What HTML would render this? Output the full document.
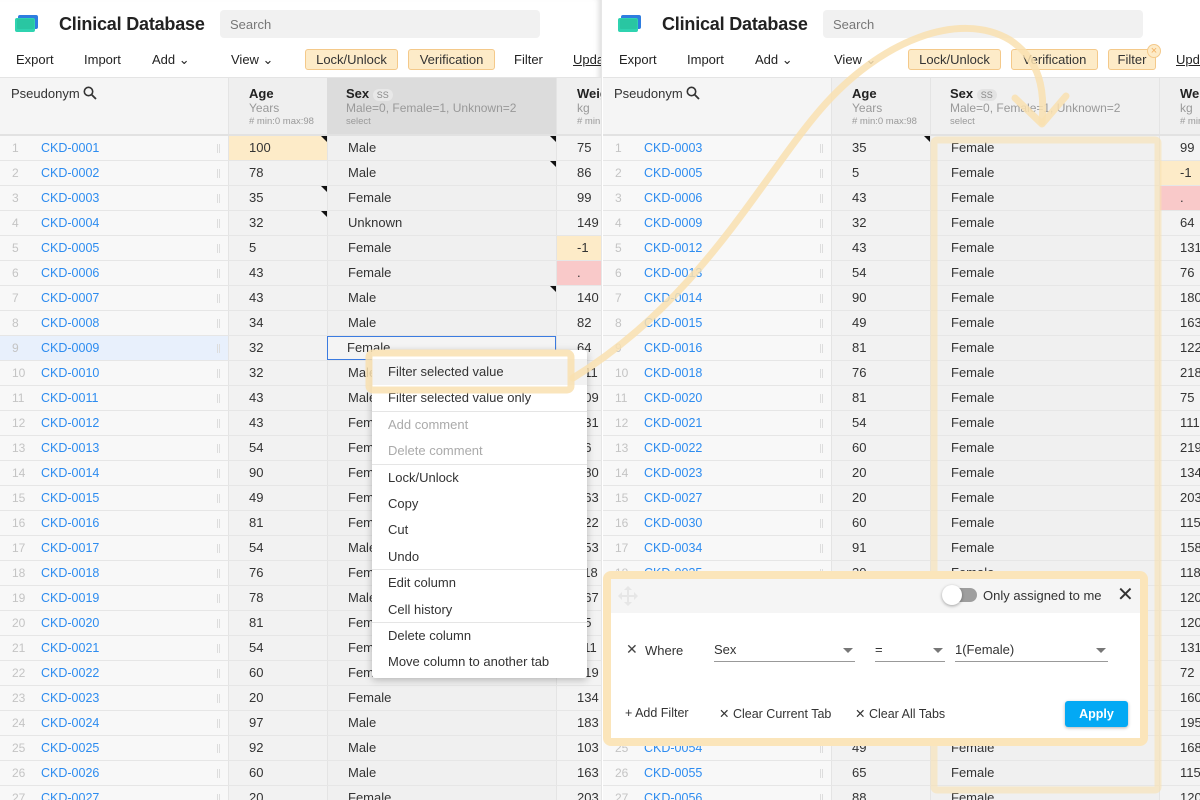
<!DOCTYPE html>
<html><head><meta charset="utf-8">
<style>
*{box-sizing:border-box;margin:0;padding:0}
body{width:1200px;height:800px;overflow:hidden;background:#fff;font-family:"Liberation Sans",Arial,sans-serif;font-size:13px;color:#333;position:relative}
.panel{position:absolute;top:0;height:800px;overflow:hidden;background:#fff}
.p1{left:0;width:601px;box-shadow:inset -6px 0 6px -4px rgba(0,0,0,.15)}
.p2{left:601px;width:599px;border-left:1px solid #e6e6e6}
.in{position:absolute;top:0;left:0;width:700px;height:800px}
.p2 .in{left:1px}
.logo{position:absolute;left:14px;top:14px;width:26px;height:20px}
.title{position:absolute;left:59px;top:14px;font-size:18px;font-weight:bold;color:#222;letter-spacing:-.2px}
.search{position:absolute;left:220px;top:10px;width:320px;height:28px;background:#f1f1f1;border-radius:4px;color:#777;font-size:13px;padding:7px 10px}
.tb{position:absolute;top:52px;font-size:13px;color:#222}
.btn{position:absolute;top:49px;height:21px;background:#fdebc8;border:1px solid #f4c98a;border-radius:3px;font-size:13px;color:#333;text-align:center;line-height:19px}
.hdr{position:absolute;top:77px;left:0;width:700px;height:59px;border-top:1px solid #e4e4e4;border-bottom:3px solid #e2e2e2}
.hc{position:absolute;top:0;height:56px;white-space:nowrap;overflow:hidden}
.hn{font-weight:bold;font-size:13px;color:#222}
.hs{font-size:12px;color:#999}
.hm{font-size:9.5px;color:#999;margin-top:1px}
.row{position:absolute;left:0;width:700px;height:25px;border-bottom:1px solid #e6e6e6}
.c{position:absolute;top:0;height:24px;line-height:24px}
.n{left:0;width:228px;background:#f8f8f8;color:#c4c4c4;padding-left:12px;font-size:12px}
.id{position:absolute;left:41px;color:#2d8cf0;font-size:12.5px}
.g{position:absolute;left:217px;top:8px;width:3px;height:9px;border-left:1px solid #ddd;border-right:1px solid #ddd}
.a{left:228px;width:99px;background:#f2f2f2;padding-left:20px;border-left:1px solid #e4e4e4}
.s{left:327px;width:229px;background:#f0f0f0;padding-left:20px;border-left:1px solid #e4e4e4}
.w{left:556px;width:100px;background:#f3f3f3;padding-left:20px;border-left:1px solid #e4e4e4}
.tri:after{content:"";position:absolute;right:0;top:0;border-top:6px solid #111;border-left:6px solid transparent}
.or{background:#fdebc8}
.rd{background:#f9c9c9}
.menu{position:absolute;left:372px;top:350px;width:215px;height:328px;background:#fff;box-shadow:0 2px 8px rgba(0,0,0,.25);border-radius:3px;z-index:5}
.mi{height:26.4px;line-height:26px;padding-left:16px;font-size:13px;color:#333}
.mi.d{color:#aaa}
.sep{border-bottom:1px solid #e5e5e5}
.fp{position:absolute;left:603px;top:571px;width:545px;height:175px;border:8px solid #fbe5ba;border-radius:8px;background:#fff;z-index:8}
.fh{height:34px;background:#f5f5f5;position:relative}
.sel{position:absolute;top:63px;border-bottom:1px solid #999;height:20px;font-size:13px;color:#333}
.sel:after{content:"";position:absolute;right:2px;top:6px;border-top:5px solid #777;border-left:5px solid transparent;border-right:5px solid transparent}
</style></head><body>

<!-- LEFT PANEL -->
<div class="panel p1"><div class="in">
<svg class="logo" viewBox="0 0 26 20"><rect x="4" y="1" width="20" height="14" rx="2" fill="#2e7de0"/><rect x="1" y="4" width="20" height="14" rx="2" fill="#2fd3b0"/><rect x="3" y="5" width="17" height="10" rx="1" fill="#29c6a2"/></svg>
<div class="title">Clinical Database</div>
<div class="search">Search</div>
<div class="tb" style="left:16px">Export</div>
<div class="tb" style="left:84px">Import</div>
<div class="tb" style="left:152px">Add ⌄</div>
<div class="tb" style="left:231px">View ⌄</div>
<div class="btn" style="left:305px;width:93px">Lock/Unlock</div>
<div class="btn" style="left:408px;width:87px">Verification</div>
<div class="tb" style="left:514px">Filter</div>
<div class="tb" style="left:573px;text-decoration:underline">Update</div>
<div class="hdr">
 <div class="hc" style="left:0;width:228px;background:#f5f5f5;padding:8px 11px">Pseudonym <svg width="14" height="14" viewBox="0 0 14 14" style="vertical-align:-2px"><circle cx="5.5" cy="5.5" r="4.2" fill="none" stroke="#333" stroke-width="1.6"/><path d="M8.6 8.6L13 13" stroke="#333" stroke-width="1.8"/></svg></div>
 <div class="hc" style="left:228px;width:99px;background:#efefef;padding:8px 0 0 20px;border-left:1px solid #e4e4e4"><div class="hn">Age</div><div class="hs">Years</div><div class="hm"># min:0 max:98</div></div>
 <div class="hc" style="left:327px;width:229px;background:#dcdcdc;padding:8px 0 0 19px"><div class="hn">Sex <span style="font-weight:normal;font-size:9px;color:#888;background:#e8e8e8;border-radius:8px;padding:1px 4px">SS</span></div><div class="hs">Male=0, Female=1, Unknown=2</div><div class="hm">select</div></div>
 <div class="hc" style="left:556px;width:100px;background:#efefef;padding:8px 0 0 20px;border-left:1px solid #e4e4e4"><div class="hn">Weight</div><div class="hs">kg</div><div class="hm"># min:0</div></div>
</div>
<div class="row" style="top:136px"><div class="c n">1<span class="id">CKD-0001</span><span class="g"></span></div><div class="c a or tri">100</div><div class="c s tri">Male</div><div class="c w">75</div></div>
<div class="row" style="top:161px"><div class="c n">2<span class="id">CKD-0002</span><span class="g"></span></div><div class="c a">78</div><div class="c s tri">Male</div><div class="c w">86</div></div>
<div class="row" style="top:186px"><div class="c n">3<span class="id">CKD-0003</span><span class="g"></span></div><div class="c a tri">35</div><div class="c s">Female</div><div class="c w">99</div></div>
<div class="row" style="top:211px"><div class="c n">4<span class="id">CKD-0004</span><span class="g"></span></div><div class="c a tri">32</div><div class="c s">Unknown</div><div class="c w">149</div></div>
<div class="row" style="top:236px"><div class="c n">5<span class="id">CKD-0005</span><span class="g"></span></div><div class="c a">5</div><div class="c s">Female</div><div class="c w or">-1</div></div>
<div class="row" style="top:261px"><div class="c n">6<span class="id">CKD-0006</span><span class="g"></span></div><div class="c a">43</div><div class="c s">Female</div><div class="c w rd">.</div></div>
<div class="row" style="top:286px"><div class="c n">7<span class="id">CKD-0007</span><span class="g"></span></div><div class="c a">43</div><div class="c s tri">Male</div><div class="c w">140</div></div>
<div class="row" style="top:311px"><div class="c n">8<span class="id">CKD-0008</span><span class="g"></span></div><div class="c a">34</div><div class="c s">Male</div><div class="c w">82</div></div>
<div class="row" style="top:336px"><div class="c n" style="background:#e8f0fc">9<span class="id">CKD-0009</span><span class="g"></span></div><div class="c a">32</div><div class="c s" style="border:1.5px solid #3b7be0;background:#f4f4f4;line-height:22px;padding-left:19px">Female</div><div class="c w">64</div></div>
<div class="row" style="top:361px"><div class="c n">10<span class="id">CKD-0010</span><span class="g"></span></div><div class="c a">32</div><div class="c s">Male</div><div class="c w">211</div></div>
<div class="row" style="top:386px"><div class="c n">11<span class="id">CKD-0011</span><span class="g"></span></div><div class="c a">43</div><div class="c s">Male</div><div class="c w">109</div></div>
<div class="row" style="top:411px"><div class="c n">12<span class="id">CKD-0012</span><span class="g"></span></div><div class="c a">43</div><div class="c s">Female</div><div class="c w">131</div></div>
<div class="row" style="top:436px"><div class="c n">13<span class="id">CKD-0013</span><span class="g"></span></div><div class="c a">54</div><div class="c s">Female</div><div class="c w">76</div></div>
<div class="row" style="top:461px"><div class="c n">14<span class="id">CKD-0014</span><span class="g"></span></div><div class="c a">90</div><div class="c s">Female</div><div class="c w">180</div></div>
<div class="row" style="top:486px"><div class="c n">15<span class="id">CKD-0015</span><span class="g"></span></div><div class="c a">49</div><div class="c s">Female</div><div class="c w">163</div></div>
<div class="row" style="top:511px"><div class="c n">16<span class="id">CKD-0016</span><span class="g"></span></div><div class="c a">81</div><div class="c s">Female</div><div class="c w">122</div></div>
<div class="row" style="top:536px"><div class="c n">17<span class="id">CKD-0017</span><span class="g"></span></div><div class="c a">54</div><div class="c s">Male</div><div class="c w">153</div></div>
<div class="row" style="top:561px"><div class="c n">18<span class="id">CKD-0018</span><span class="g"></span></div><div class="c a">76</div><div class="c s">Female</div><div class="c w">118</div></div>
<div class="row" style="top:586px"><div class="c n">19<span class="id">CKD-0019</span><span class="g"></span></div><div class="c a">78</div><div class="c s">Male</div><div class="c w">167</div></div>
<div class="row" style="top:611px"><div class="c n">20<span class="id">CKD-0020</span><span class="g"></span></div><div class="c a">81</div><div class="c s">Female</div><div class="c w">75</div></div>
<div class="row" style="top:636px"><div class="c n">21<span class="id">CKD-0021</span><span class="g"></span></div><div class="c a">54</div><div class="c s">Female</div><div class="c w">111</div></div>
<div class="row" style="top:661px"><div class="c n">22<span class="id">CKD-0022</span><span class="g"></span></div><div class="c a">60</div><div class="c s">Female</div><div class="c w">219</div></div>
<div class="row" style="top:686px"><div class="c n">23<span class="id">CKD-0023</span><span class="g"></span></div><div class="c a">20</div><div class="c s">Female</div><div class="c w">134</div></div>
<div class="row" style="top:711px"><div class="c n">24<span class="id">CKD-0024</span><span class="g"></span></div><div class="c a">97</div><div class="c s">Male</div><div class="c w">183</div></div>
<div class="row" style="top:736px"><div class="c n">25<span class="id">CKD-0025</span><span class="g"></span></div><div class="c a">92</div><div class="c s">Male</div><div class="c w">103</div></div>
<div class="row" style="top:761px"><div class="c n">26<span class="id">CKD-0026</span><span class="g"></span></div><div class="c a">60</div><div class="c s">Male</div><div class="c w">163</div></div>
<div class="row" style="top:786px"><div class="c n">27<span class="id">CKD-0027</span><span class="g"></span></div><div class="c a">20</div><div class="c s">Female</div><div class="c w">203</div></div>
</div></div>

<div class="menu">
 <div class="mi" style="background:#f2f2f2;margin-top:9px">Filter selected value</div>
 <div class="mi sep">Filter selected value only</div>
 <div class="mi d">Add comment</div>
 <div class="mi d sep">Delete comment</div>
 <div class="mi">Lock/Unlock</div>
 <div class="mi">Copy</div>
 <div class="mi">Cut</div>
 <div class="mi sep">Undo</div>
 <div class="mi">Edit column</div>
 <div class="mi sep">Cell history</div>
 <div class="mi">Delete column</div>
 <div class="mi">Move column to another tab</div>
</div>

<!-- RIGHT PANEL -->
<div class="panel p2"><div class="in">
<svg class="logo" viewBox="0 0 26 20"><rect x="4" y="1" width="20" height="14" rx="2" fill="#2e7de0"/><rect x="1" y="4" width="20" height="14" rx="2" fill="#2fd3b0"/><rect x="3" y="5" width="17" height="10" rx="1" fill="#29c6a2"/></svg>
<div class="title">Clinical Database</div>
<div class="search">Search</div>
<div class="tb" style="left:16px">Export</div>
<div class="tb" style="left:84px">Import</div>
<div class="tb" style="left:152px">Add ⌄</div>
<div class="tb" style="left:231px">View ⌄</div>
<div class="btn" style="left:305px;width:93px">Lock/Unlock</div>
<div class="btn" style="left:408px;width:87px">Verification</div>
<div class="btn" style="left:505px;width:48px">Filter</div>
<div style="position:absolute;left:544px;top:44px;width:14px;height:14px;border-radius:50%;background:#fdebc8;border:1px solid #f4c98a;color:#f4b060;font-size:11px;line-height:12px;text-align:center">×</div>
<div class="tb" style="left:573px;text-decoration:underline">Update</div>
<div class="hdr">
 <div class="hc" style="left:0;width:228px;background:#f5f5f5;padding:8px 11px">Pseudonym <svg width="14" height="14" viewBox="0 0 14 14" style="vertical-align:-2px"><circle cx="5.5" cy="5.5" r="4.2" fill="none" stroke="#333" stroke-width="1.6"/><path d="M8.6 8.6L13 13" stroke="#333" stroke-width="1.8"/></svg></div>
 <div class="hc" style="left:228px;width:99px;background:#efefef;padding:8px 0 0 20px;border-left:1px solid #e4e4e4"><div class="hn">Age</div><div class="hs">Years</div><div class="hm"># min:0 max:98</div></div>
 <div class="hc" style="left:327px;width:229px;background:#f0f0f0;padding:8px 0 0 19px;border-left:1px solid #e4e4e4"><div class="hn">Sex <span style="font-weight:normal;font-size:9px;color:#888;background:#e3e3e3;border-radius:8px;padding:1px 4px">SS</span></div><div class="hs">Male=0, Female=1, Unknown=2</div><div class="hm">select</div></div>
 <div class="hc" style="left:556px;width:100px;background:#efefef;padding:8px 0 0 20px;border-left:1px solid #e4e4e4"><div class="hn">Weight</div><div class="hs">kg</div><div class="hm"># min:0</div></div>
</div>
<div class="row" style="top:136px"><div class="c n">1<span class="id">CKD-0003</span><span class="g"></span></div><div class="c a tri">35</div><div class="c s">Female</div><div class="c w">99</div></div>
<div class="row" style="top:161px"><div class="c n">2<span class="id">CKD-0005</span><span class="g"></span></div><div class="c a">5</div><div class="c s">Female</div><div class="c w or">-1</div></div>
<div class="row" style="top:186px"><div class="c n">3<span class="id">CKD-0006</span><span class="g"></span></div><div class="c a">43</div><div class="c s">Female</div><div class="c w rd">.</div></div>
<div class="row" style="top:211px"><div class="c n">4<span class="id">CKD-0009</span><span class="g"></span></div><div class="c a">32</div><div class="c s">Female</div><div class="c w">64</div></div>
<div class="row" style="top:236px"><div class="c n">5<span class="id">CKD-0012</span><span class="g"></span></div><div class="c a">43</div><div class="c s">Female</div><div class="c w">131</div></div>
<div class="row" style="top:261px"><div class="c n">6<span class="id">CKD-0013</span><span class="g"></span></div><div class="c a">54</div><div class="c s">Female</div><div class="c w">76</div></div>
<div class="row" style="top:286px"><div class="c n">7<span class="id">CKD-0014</span><span class="g"></span></div><div class="c a">90</div><div class="c s">Female</div><div class="c w">180</div></div>
<div class="row" style="top:311px"><div class="c n">8<span class="id">CKD-0015</span><span class="g"></span></div><div class="c a">49</div><div class="c s">Female</div><div class="c w">163</div></div>
<div class="row" style="top:336px"><div class="c n">9<span class="id">CKD-0016</span><span class="g"></span></div><div class="c a">81</div><div class="c s">Female</div><div class="c w">122</div></div>
<div class="row" style="top:361px"><div class="c n">10<span class="id">CKD-0018</span><span class="g"></span></div><div class="c a">76</div><div class="c s">Female</div><div class="c w">218</div></div>
<div class="row" style="top:386px"><div class="c n">11<span class="id">CKD-0020</span><span class="g"></span></div><div class="c a">81</div><div class="c s">Female</div><div class="c w">75</div></div>
<div class="row" style="top:411px"><div class="c n">12<span class="id">CKD-0021</span><span class="g"></span></div><div class="c a">54</div><div class="c s">Female</div><div class="c w">111</div></div>
<div class="row" style="top:436px"><div class="c n">13<span class="id">CKD-0022</span><span class="g"></span></div><div class="c a">60</div><div class="c s">Female</div><div class="c w">219</div></div>
<div class="row" style="top:461px"><div class="c n">14<span class="id">CKD-0023</span><span class="g"></span></div><div class="c a">20</div><div class="c s">Female</div><div class="c w">134</div></div>
<div class="row" style="top:486px"><div class="c n">15<span class="id">CKD-0027</span><span class="g"></span></div><div class="c a">20</div><div class="c s">Female</div><div class="c w">203</div></div>
<div class="row" style="top:511px"><div class="c n">16<span class="id">CKD-0030</span><span class="g"></span></div><div class="c a">60</div><div class="c s">Female</div><div class="c w">115</div></div>
<div class="row" style="top:536px"><div class="c n">17<span class="id">CKD-0034</span><span class="g"></span></div><div class="c a">91</div><div class="c s">Female</div><div class="c w">158</div></div>
<div class="row" style="top:561px"><div class="c n">18<span class="id">CKD-0035</span><span class="g"></span></div><div class="c a">30</div><div class="c s">Female</div><div class="c w">118</div></div>
<div class="row" style="top:586px"><div class="c n">19<span class="id">CKD-0038</span><span class="g"></span></div><div class="c a">40</div><div class="c s">Female</div><div class="c w">120</div></div>
<div class="row" style="top:611px"><div class="c n">20<span class="id">CKD-0040</span><span class="g"></span></div><div class="c a">40</div><div class="c s">Female</div><div class="c w">120</div></div>
<div class="row" style="top:636px"><div class="c n">21<span class="id">CKD-0041</span><span class="g"></span></div><div class="c a">40</div><div class="c s">Female</div><div class="c w">131</div></div>
<div class="row" style="top:661px"><div class="c n">22<span class="id">CKD-0044</span><span class="g"></span></div><div class="c a">40</div><div class="c s">Female</div><div class="c w">72</div></div>
<div class="row" style="top:686px"><div class="c n">23<span class="id">CKD-0047</span><span class="g"></span></div><div class="c a">40</div><div class="c s">Female</div><div class="c w">160</div></div>
<div class="row" style="top:711px"><div class="c n">24<span class="id">CKD-0050</span><span class="g"></span></div><div class="c a">40</div><div class="c s">Female</div><div class="c w">195</div></div>
<div class="row" style="top:736px"><div class="c n">25<span class="id">CKD-0054</span><span class="g"></span></div><div class="c a">49</div><div class="c s">Female</div><div class="c w">168</div></div>
<div class="row" style="top:761px"><div class="c n">26<span class="id">CKD-0055</span><span class="g"></span></div><div class="c a">65</div><div class="c s">Female</div><div class="c w">115</div></div>
<div class="row" style="top:786px"><div class="c n">27<span class="id">CKD-0056</span><span class="g"></span></div><div class="c a">88</div><div class="c s">Female</div><div class="c w">120</div></div>
</div></div>

<!-- annotations -->
<svg style="position:absolute;left:0;top:0;z-index:7;pointer-events:none" width="1200" height="800">
 <g fill="none" stroke="#f9e1b0" stroke-opacity="0.85" stroke-width="7" stroke-linejoin="round" stroke-linecap="round">
  <rect x="369" y="353" width="202" height="37" rx="4"/>
  <rect x="934" y="140" width="224" height="650" rx="3" stroke-opacity="0.6"/>
  <path d="M573 378 C 700 300, 760 180, 820 110 C 880 40, 960 10, 1010 40 C 1040 60, 1045 90, 1042 122"/>
  <path d="M1015 98 L1042 124 L1066 96"/>
 </g>
</svg>

<div class="fp">
 <div class="fh">
  <svg style="position:absolute;left:6px;top:6px" width="22" height="22" viewBox="0 0 22 22"><path d="M11 1l4 4h-3v5h5V7l4 4-4 4v-3h-5v5h3l-4 4-4-4h3v-5H5v3l-4-4 4-4v3h5V5H7z" fill="#e6e6e6"/></svg>
  <div style="position:absolute;left:334px;top:9px;width:32px;height:14px;border-radius:7px;background:#9e9e9e"></div>
  <div style="position:absolute;left:331px;top:6px;width:20px;height:20px;border-radius:50%;background:#fff;box-shadow:0 1px 3px rgba(0,0,0,.35)"></div>
  <div style="position:absolute;left:372px;top:9px;font-size:13px;color:#333">Only assigned to me</div>
  <div style="position:absolute;left:506px;top:3px;font-size:20px;color:#333">✕</div>
 </div>
 <div style="position:absolute;left:15px;top:62px;font-size:14px;color:#444">✕</div>
 <div style="position:absolute;left:34px;top:64px;font-size:13px;color:#333">Where</div>
 <div class="sel" style="left:103px;width:141px">Sex</div>
 <div class="sel" style="left:264px;width:70px">=</div>
 <div class="sel" style="left:344px;width:153px">1(Female)</div>
 <div style="position:absolute;left:14px;top:127px;font-size:12.5px;color:#333">+ Add Filter</div>
 <div style="position:absolute;left:108px;top:127px;font-size:12.5px;color:#333">✕ Clear Current Tab</div>
 <div style="position:absolute;left:244px;top:127px;font-size:12.5px;color:#333">✕ Clear All Tabs</div>
 <div style="position:absolute;left:454px;top:122px;width:63px;height:26px;background:#03a9f4;border-radius:3px;color:#fff;font-weight:bold;font-size:12.5px;text-align:center;line-height:26px;box-shadow:0 1px 3px rgba(0,0,0,.3)">Apply</div>
</div>
</body></html>
